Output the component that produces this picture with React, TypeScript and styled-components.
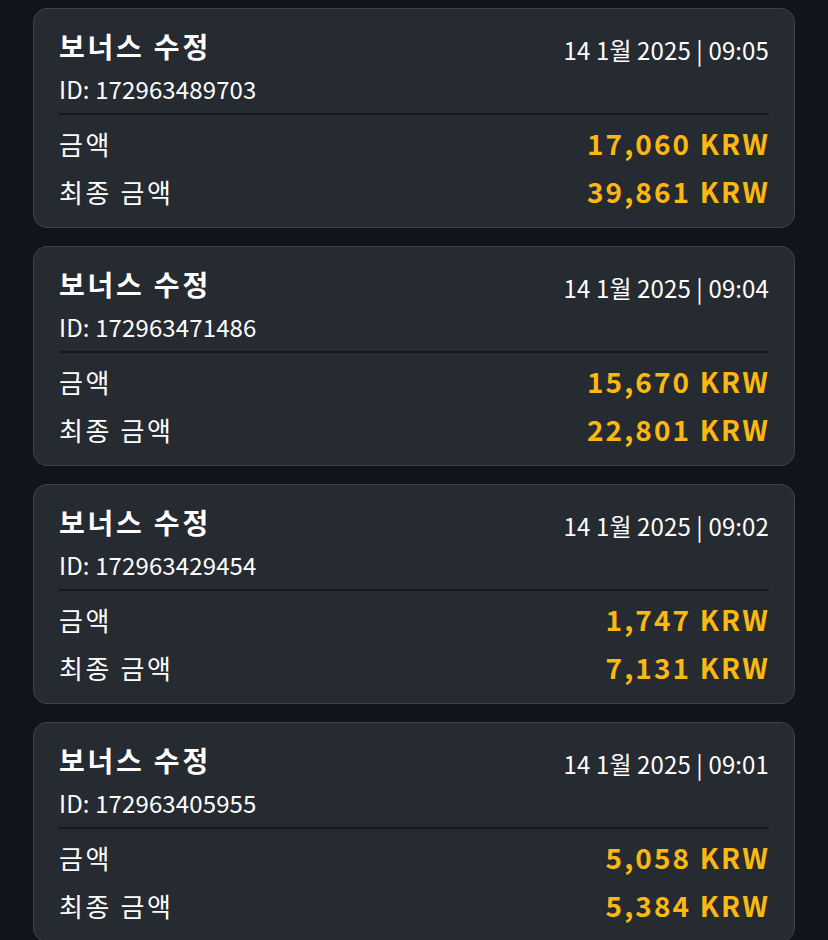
import React from "react";
import styled, { createGlobalStyle } from "styled-components";

const GlobalStyle = createGlobalStyle`
  html, body {
    margin: 0;
    padding: 0;
    background: #0f151b;
  }
  body {
    font-family: "Noto Sans CJK KR", "Noto Sans", sans-serif;
    color: #ffffff;
  }
`;

const Page = styled.div`
  display: flex;
  flex-direction: column;
  gap: 18px;
  padding: 8px 33px 20px;
  background: #0f151b;
  min-height: 940px;
  box-sizing: border-box;
`;

const Card = styled.div`
  background: #262a31;
  border: 1px solid #404348;
  border-radius: 14px;
  padding: 18px 25px 12px;
`;

const Header = styled.div`
  display: flex;
  justify-content: space-between;
  align-items: flex-end;
`;

const Title = styled.div`
  font-size: 28px;
  font-weight: 700;
  line-height: 38px;
  letter-spacing: 2.8px;
`;

const DateText = styled.div`
  font-size: 24px;
  line-height: 30px;
  font-weight: 400;
  letter-spacing: 0.12px;
`;

const IdLine = styled.div`
  margin-top: 6px;
  font-size: 24px;
  line-height: 36px;
  letter-spacing: 0.13px;
`;

const Divider = styled.div`
  height: 2px;
  background: #14181e;
  margin: 6px 0 4px;
`;

const Row = styled.div`
  display: flex;
  justify-content: space-between;
  align-items: center;
  height: 48px;
`;

const Label = styled.span`
  font-size: 26px;
  letter-spacing: 2.6px;
`;

const Amount = styled.span`
  font-size: 28px;
  font-weight: 700;
  color: #fbb813;
  letter-spacing: 2.1px;
  margin-right: -1px;
`;

type Item = { date: string; id: string; amount: string; total: string };

const items: Item[] = [
  { date: "14 1월 2025 | 09:05", id: "172963489703", amount: "17,060 KRW", total: "39,861 KRW" },
  { date: "14 1월 2025 | 09:04", id: "172963471486", amount: "15,670 KRW", total: "22,801 KRW" },
  { date: "14 1월 2025 | 09:02", id: "172963429454", amount: "1,747 KRW", total: "7,131 KRW" },
  { date: "14 1월 2025 | 09:01", id: "172963405955", amount: "5,058 KRW", total: "5,384 KRW" },
];

export default function App() {
  return (
    <>
      <GlobalStyle />
      <Page>
        {items.map((it) => (
          <Card key={it.id}>
            <Header>
              <Title>보너스 수정</Title>
              <DateText>{it.date}</DateText>
            </Header>
            <IdLine>ID: {it.id}</IdLine>
            <Divider />
            <Row>
              <Label>금액</Label>
              <Amount>{it.amount}</Amount>
            </Row>
            <Row>
              <Label>최종 금액</Label>
              <Amount>{it.total}</Amount>
            </Row>
          </Card>
        ))}
      </Page>
    </>
  );
}
